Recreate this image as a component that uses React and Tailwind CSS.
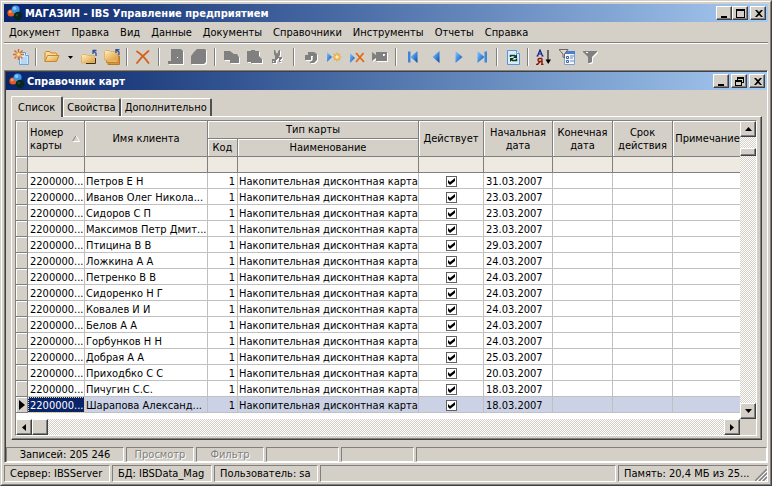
import React, { useState } from 'react';
import clsx from 'clsx';

const MENU = ['Документ', 'Правка', 'Вид', 'Данные', 'Документы', 'Справочники', 'Инструменты', 'Отчеты', 'Справка'];
const TABS = ['Список', 'Свойства', 'Дополнительно'];

const CARDS = [
  { client: 'Петров Е Н', start: '31.03.2007' },
  { client: 'Иванов Олег Никола...', start: '23.03.2007' },
  { client: 'Сидоров С П', start: '23.03.2007' },
  { client: 'Максимов Петр Дмит...', start: '23.03.2007' },
  { client: 'Птицина В В', start: '29.03.2007' },
  { client: 'Ложкина А А', start: '24.03.2007' },
  { client: 'Петренко В В', start: '24.03.2007' },
  { client: 'Сидоренко Н Г', start: '24.03.2007' },
  { client: 'Ковалев И И', start: '24.03.2007' },
  { client: 'Белов А А', start: '24.03.2007' },
  { client: 'Горбунков Н Н', start: '24.03.2007' },
  { client: 'Добрая А А', start: '25.03.2007' },
  { client: 'Приходбко С С', start: '20.03.2007' },
  { client: 'Пичугин С.С.', start: '18.03.2007' },
  { client: 'Шарапова Александ...', start: '18.03.2007' },
];

const RAISED = 'bg-[#d4d0c8] border border-t-white border-l-white border-r-[#404040] border-b-[#404040] shadow-[inset_-1px_-1px_0_#808080]';
const CHECKER = 'bg-[repeating-conic-gradient(#ffffff_0_25%,#d4d0c8_0_50%)] bg-[length:2px_2px]';
const HEAD = 'border-r border-b border-[#808080] bg-[#d4d0c8] p-0 text-center font-normal leading-[13px] shadow-[inset_1px_1px_0_#ffffff]';
const CELL = 'h-4 overflow-hidden border-r border-b border-[#c0c0c0] pt-0.5 pb-0 leading-[13px]';

/* ---------- Icons ---------- */

const Svg = ({ children, size = 16, box = 16, ...rest }) => (
  <svg width={size} height={size} viewBox={`0 0 ${box} ${box}`} fill="none" aria-hidden="true" {...rest}>
    {children}
  </svg>
);

const AppIcon = () => (
  <Svg>
    <circle cx="4" cy="8" r="3.6" fill="#e8591c" />
    <circle cx="3.2" cy="6.8" r="1.5" fill="#f79a63" />
    <circle cx="8.6" cy="4.4" r="4" fill="#3d95e6" />
    <circle cx="7.6" cy="3.2" r="1.7" fill="#8cc6fa" />
    <circle cx="11" cy="11" r="4.2" fill="#06281c" />
    <circle cx="9.8" cy="10" r="1.2" fill="#1c4a36" />
  </Svg>
);

const NewIcon = () => (
  <Svg>
    <path d="M6.5 3.5h6l3 3v9h-9z" fill="#d6eafc" stroke="#6f9fd8" />
    <path d="M8 9l6-2v8H8z" fill="#b4d6f8" />
    <path d="M12.5 3.5v3h3" fill="#fff" stroke="#6f9fd8" />
    <path d="M5.5 0v3M5.5 8v3M0 5.5h3M8 5.5h3M1.5 1.5l2 2M7.5 7.5l2 2M9.5 1.5l-2 2M3.5 7.5l-2 2" stroke="#d9691c" strokeWidth="1.4" />
    <circle cx="5.5" cy="5.5" r="2" fill="#ffe49a" stroke="#e88a2c" />
  </Svg>
);

const FolderFill = () => (
  <defs>
    <linearGradient id="folder" x1="0" y1="0" x2="1" y2="1">
      <stop offset="0" stopColor="#fff0c0" />
      <stop offset="1" stopColor="#dc9c3c" />
    </linearGradient>
  </defs>
);

const OpenIcon = () => (
  <Svg>
    <FolderFill />
    <path d="M1 12.500V3.500l1-1h4l1 1.500h5l1 1v2" fill="#fbdc94" stroke="#cf8426" />
    <path d="M1 12.500l2.500-6h11.500l-2.500 6z" fill="url(#folder)" stroke="#cf8426" strokeLinejoin="round" />
  </Svg>
);

const FolderUpIcon = () => (
  <Svg>
    <FolderFill />
    <path d="M.5 6.500l1-1h4l1 1h7v7.500h-13z" fill="url(#folder)" stroke="#e0b468" />
    <path d="M5 14.500h9.500V9" stroke="#3b2d14" />
    <path d="M15 7V4l-3-2M12 5V1.500h3.500" stroke="#2d4f9c" strokeWidth="1.300" />
  </Svg>
);

const FoldersIcon = () => (
  <Svg>
    <FolderFill />
    <path d="M4 7h11.500v8.500H4z" fill="#d8963c" stroke="#b87828" />
    <path d="M2.500 5h11.500v8.500H2.500z" fill="#eab45c" stroke="#c5842e" />
    <path d="M.5 2.500l1-1h4l1 1H13v8.500H.5z" fill="url(#folder)" stroke="#e0b468" />
    <path d="M15 6V3l-2.500-2M12 4V.7h3.500" stroke="#2d4f9c" strokeWidth="1.300" />
  </Svg>
);

const DeleteIcon = () => (
  <Svg>
    <path d="M2 2.500C6 5 10 9 13.500 14M13.500 2C9 5.500 5.500 9 2 14" stroke="#d4601c" strokeWidth="1.800" strokeLinecap="round" />
  </Svg>
);

// Disabled pictures are a grey silhouette with a white edge to the lower right
const Disabled = ({ d }) => (
  <Svg>
    <path d={d} fill="#ffffff" transform="translate(1 1)" fillRule="evenodd" />
    <path d={d} fill="#808080" fillRule="evenodd" />
  </Svg>
);

const SAVE = 'M3 0h10l2 2v13H0v-3h3zM9 8v1h1V8z';
const SAVE_ALL = 'M6 0h8l1 1v12l-2 2H0V7l3-4z';
const COPY = 'M0 2h6l4 3h3l2 3v6H6v-3H0z';
const PASTE = 'M0 2h4V1h4v1h4v5l3 3v4H4v-1H0z';
const CUT = 'M4 1h1l2 4 2-4h1v5l-1 2h3v2h-1v3H9v-3H7v1H6v3H2v-4h3V7L4 5zM3 12v1h1v-1zM8 9v1h1V9zM10 11v1h1v-1z';
const UNDO = 'M5 3h6l3 2v6l-3 3H7v-1l3-2V7H8v4H2V6h3z';
const POST = 'M0 3l4 3V3h11v9H4V9l-4 3zM11 5v2h2V5z';
const FUNNEL = 'M1 2h14v1l-5 5v5l-2 1H6V8L1 3zM4 3v1h2V3z';

const Blue = () => (
  <defs>
    <linearGradient id="blue" x1="0" y1="0" x2="1" y2="1">
      <stop offset="0" stopColor="#8cc8fa" />
      <stop offset=".5" stopColor="#3f8ee4" />
      <stop offset="1" stopColor="#0c3f98" />
    </linearGradient>
  </defs>
);

const InsertIcon = () => (
  <Svg>
    <Blue />
    <path d="M1 3l5 5-5 5z" fill="url(#blue)" />
    <path d="M11 3.500v9M6.500 8h9M8 5l6 6M14 5l-6 6" stroke="#eba32c" strokeWidth="1.200" />
    <circle cx="11" cy="8" r="1.700" fill="#fff3b0" />
  </Svg>
);

const RemoveIcon = () => (
  <Svg>
    <Blue />
    <path d="M1 4l5 5-5 5z" fill="url(#blue)" />
    <path d="M7 4l8 9M14.500 4L7 13" stroke="#e06a14" strokeWidth="1.800" />
  </Svg>
);

const FirstIcon = () => (
  <Svg>
    <Blue />
    <path d="M3 2.500h2.500v11H3z" fill="#3f86d8" />
    <path d="M12.500 2v12L5.500 8z" fill="url(#blue)" />
  </Svg>
);

const PrevIcon = () => (
  <Svg>
    <Blue />
    <path d="M11.500 2v12L4.500 8z" fill="url(#blue)" />
  </Svg>
);

const NextIcon = () => (
  <Svg>
    <Blue />
    <path d="M4.500 2v12l7-6z" fill="url(#blue)" />
  </Svg>
);

const LastIcon = () => (
  <Svg>
    <Blue />
    <path d="M10.500 2.500H13v11h-2.500z" fill="#3f86d8" />
    <path d="M3.500 2v12l7-6z" fill="url(#blue)" />
  </Svg>
);

const RefreshIcon = () => (
  <Svg>
    <path d="M2.500 1.500h9l3 3v11h-12z" fill="#d8ebff" stroke="#5b94d6" />
    <path d="M11.500 1.500v3h3" fill="#fff" stroke="#5b94d6" />
    <path d="M5.500 8V6.500h4l1 1M11.500 9.500v2h-4l-1-1" stroke="#0c3c1c" strokeWidth="1.500" />
    <path d="M12 5v4H8zM5 13V9h4z" fill="#0c3c1c" />
  </Svg>
);

const SortIcon = () => (
  <Svg>
    <path d="M1.500 7l2.500-6 2.500 6M2 5h4M.5 7h2M5.500 7h2" stroke="#0a1c8c" strokeWidth="1.200" />
    <path d="M6 9.500v6M6 9.500H3.500a1.500 1.500 0 000 3H6M4 12.500L1.500 15.500M5 15.500h2.500M0 15.500h2" stroke="#8c1408" strokeWidth="1.400" />
    <path d="M12 1v12" stroke="#000" />
    <path d="M9.500 10.500h5.500L12.250 15z" fill="#000" />
  </Svg>
);

const FilterTableIcon = () => (
  <Svg>
    <path d="M5.500 2.500h10v13h-10z" fill="#f4f8fe" stroke="#7f9fce" />
    <path d="M6 2h10v3H6z" fill="#4a7fd0" />
    <path d="M7.500 7.500h2v2h-2zM7.500 11.500h2v2h-2z" stroke="#3d5f94" />
    <path d="M11 7h4M11 9h3M11 12h4" stroke="#5c86c4" />
    <path d="M0 .5h9L5.500 5v4l-1.500-1V5z" fill="#dcd8d0" stroke="#6c6860" />
  </Svg>
);

/* ---------- Chrome ---------- */

const GLYPHS = {
  min: 'M3 8h6v2H3z',
  max: 'M2 1h9v9H2zM3 3v6h7V3z',
  restore: 'M4 1h7v6H9v3H2V4h2zM5 3v1h4v2h1V3zM3 6v3h5V6z',
  close: 'M3 2h2l2 2 2-2h2L8 5.500 11 9H9L7 7 5 9H3l3-3.500z',
};

const CaptionButton = ({ kind, label }) => (
  <button aria-label={label} className={clsx('flex h-3.5 w-4 items-center justify-center', RAISED)}>
    <svg width="13" height="11" viewBox="0 0 13 11" aria-hidden="true">
      <path d={GLYPHS[kind]} fillRule="evenodd" fill="#000" />
    </svg>
  </button>
);

const TitleBar = ({ title, gap, middle }) => (
  <header className="flex h-[18px] shrink-0 items-center bg-linear-to-r from-[#0a246a] to-[#a6caf0] pr-0.5 pl-[3px] text-white">
    <AppIcon />
    <h1 className="ml-0.5 flex-1 truncate font-bold">{title}</h1>
    <div className="flex">
      <CaptionButton kind="min" label="Свернуть" />
      <span className={gap}><CaptionButton kind={middle} label="Развернуть" /></span>
      <span className="ml-0.5"><CaptionButton kind="close" label="Закрыть" /></span>
    </div>
  </header>
);

const Tool = ({ label, disabled, children }) => (
  <button aria-label={label} disabled={disabled} className="flex h-6 w-[23px] items-center justify-center">
    {children}
  </button>
);

const Separator = ({ wide }) => (
  <span className={clsx('h-[18px] w-0.5 border-l border-l-[#808080] border-r border-r-white', wide ? 'mx-1' : 'mx-[3px]')} />
);

const Toolbar = () => (
  <div className="flex h-[27px] shrink-0 items-center border-t border-white pl-[5px]">
    <Tool label="Создать"><NewIcon /></Tool>
    <Separator />
    <Tool label="Открыть"><OpenIcon /></Tool>
    <button aria-label="Варианты открытия" className="flex h-6 w-3.5 items-center justify-center">
      <svg width="5" height="3" viewBox="0 0 5 3" aria-hidden="true"><path d="M0 0h5L2.500 3z" fill="#000" /></svg>
    </button>
    <Tool label="Вверх"><FolderUpIcon /></Tool>
    <Tool label="Все папки"><FoldersIcon /></Tool>
    <Separator />
    <Tool label="Удалить"><DeleteIcon /></Tool>
    <Separator wide />
    <Tool label="Сохранить" disabled><Disabled d={SAVE} /></Tool>
    <Tool label="Сохранить все" disabled><Disabled d={SAVE_ALL} /></Tool>
    <Separator wide />
    <Tool label="Копировать" disabled><Disabled d={COPY} /></Tool>
    <Tool label="Вставить" disabled><Disabled d={PASTE} /></Tool>
    <Tool label="Вырезать" disabled><Disabled d={CUT} /></Tool>
    <Separator wide />
    <Tool label="Отменить" disabled><Disabled d={UNDO} /></Tool>
    <Tool label="Добавить запись"><InsertIcon /></Tool>
    <Tool label="Удалить запись"><RemoveIcon /></Tool>
    <Tool label="Записать" disabled><Disabled d={POST} /></Tool>
    <Separator wide />
    <Tool label="Первая"><FirstIcon /></Tool>
    <Tool label="Предыдущая"><PrevIcon /></Tool>
    <Tool label="Следующая"><NextIcon /></Tool>
    <Tool label="Последняя"><LastIcon /></Tool>
    <Separator />
    <Tool label="Обновить"><RefreshIcon /></Tool>
    <Separator />
    <Tool label="Сортировка"><SortIcon /></Tool>
    <Tool label="Настройка фильтра"><FilterTableIcon /></Tool>
    <Tool label="Фильтр" disabled><Disabled d={FUNNEL} /></Tool>
  </div>
);

const ARROWS = {
  up: 'M0 4h7L3.500 0z',
  down: 'M0 0h7L3.500 4z',
  left: 'M4 0v7L0 3.500z',
  right: 'M0 0v7l4-3.500z',
};

const ScrollButton = ({ dir, label }) => {
  const upright = dir === 'up' || dir === 'down';
  return (
    <button aria-label={label} className={clsx('flex size-4 shrink-0 items-center justify-center', RAISED)}>
      <svg width={upright ? 7 : 4} height={upright ? 4 : 7} aria-hidden="true">
        <path d={ARROWS[dir]} fill="#000" />
      </svg>
    </button>
  );
};

/* ---------- Grid ---------- */

const CheckCell = ({ checked, onChange, label }) => (
  <span className="relative mx-auto block size-[11px]">
    <input
      type="checkbox"
      aria-label={label}
      checked={checked}
      onChange={onChange}
      className="peer block size-[11px] appearance-none border border-[#606060] bg-white"
    />
    <svg width="7" height="7" viewBox="0 0 7 7" className="pointer-events-none absolute top-0.5 left-0.5 hidden peer-checked:block" aria-hidden="true">
      <path d="M0 2l2 2 5-4v3L2 7 0 5z" fill="#000" />
    </svg>
  </span>
);

const CardTable = () => {
  const [current, setCurrent] = useState(CARDS.length - 1);
  const [off, setOff] = useState([]);

  const toggle = (i) => setOff((o) => (o.includes(i) ? o.filter((x) => x !== i) : [...o, i]));

  return (
    <table className="w-full min-w-[727px] table-fixed border-separate border-spacing-0 whitespace-nowrap">
      <colgroup>
        <col className="w-3" />
        <col className="w-[57px]" />
        <col className="w-[123px]" />
        <col className="w-[30px]" />
        <col className="w-[181px]" />
        <col className="w-[65px]" />
        <col className="w-[69px]" />
        <col className="w-[60px]" />
        <col className="w-[60px]" />
        <col />
      </colgroup>
      <thead>
        <tr className="h-[18px]">
          <th rowSpan={2} className={HEAD} aria-label="Указатель" />
          <th rowSpan={2} className={HEAD}>
            <div className="flex items-center justify-between pr-1 pl-0.5 text-left">
              <span>Номер<br />карты</span>
              <svg width="8" height="7" viewBox="0 0 8 7" fill="none" aria-hidden="true">
                <path d="M4 .5L.5 6.500" stroke="#808080" />
                <path d="M4 .5l3.500 6H.5" stroke="#fff" />
              </svg>
            </div>
          </th>
          <th rowSpan={2} className={HEAD}>Имя клиента</th>
          <th colSpan={2} className={HEAD}>Тип карты</th>
          <th rowSpan={2} className={HEAD}>Действует</th>
          <th rowSpan={2} className={HEAD}>Начальная<br />дата</th>
          <th rowSpan={2} className={HEAD}>Конечная<br />дата</th>
          <th rowSpan={2} className={HEAD}>Срок<br />действия</th>
          <th rowSpan={2} className={HEAD}>Примечание</th>
        </tr>
        <tr className="h-[18px]">
          <th className={HEAD}>Код</th>
          <th className={HEAD}>Наименование</th>
        </tr>
        <tr className="h-4">
          <td className={HEAD} />
          {[1, 2, 3, 4, 5, 6, 7, 8, 9].map((c) => (
            <td key={c} className="border-r border-b border-[#808080] bg-[#eee9e1] p-0" />
          ))}
        </tr>
      </thead>
      <tbody>
        {CARDS.map((card, i) => {
          const active = i === current;
          return (
            <tr key={i} onClick={() => setCurrent(i)} className={clsx('h-4', active ? 'bg-[#ccd2e6]' : 'bg-white')}>
              <td className={HEAD}>
                {active && (
                  <svg width="6" height="10" viewBox="0 0 6 10" className="mx-auto" aria-hidden="true"><path d="M0 0v10l6-5z" fill="#000" /></svg>
                )}
              </td>
              <td className={clsx(CELL, 'pr-0 pl-0.5', active && 'bg-[#0a246a] text-white outline-1 -outline-offset-1 outline-dotted outline-[#f0d890]')}>2200000...</td>
              <td className={clsx(CELL, 'pr-0 pl-px')}>{card.client}</td>
              <td className={clsx(CELL, 'pr-0.5 pl-0 text-right')}>1</td>
              <td className={clsx(CELL, 'pr-0 pl-px')}>Накопительная дисконтная карта</td>
              <td className={clsx(CELL, 'px-0')}>
                <CheckCell checked={!off.includes(i)} onChange={() => toggle(i)} label={`Действует: ${card.client}`} />
              </td>
              <td className={clsx(CELL, 'pr-0 pl-0.5')}>{card.start}</td>
              <td className={CELL} />
              <td className={CELL} />
              <td className={CELL} />
            </tr>
          );
        })}
      </tbody>
    </table>
  );
};

const StatusCell = ({ className, children }) => (
  <div className={clsx('truncate border border-t-[#808080] border-l-[#808080] border-r-white border-b-white', className)}>
    {children}
  </div>
);

export default function App() {
  const [tab, setTab] = useState(0);

  return (
    <div className="flex h-screen flex-col bg-[#d4d0c8] font-['DejaVu_Sans_Condensed','DejaVu_Sans',sans-serif] text-[11px] leading-[13px] text-black">
      <div className="flex min-h-0 flex-1 flex-col border border-t-[#d4d0c8] border-l-[#d4d0c8] border-r-[#404040] border-b-[#404040]">
        <div className="flex min-h-0 flex-1 flex-col border border-t-white border-l-white border-r-[#808080] border-b-[#808080] p-0.5">
          <TitleBar title="МАГАЗИН - IBS Управление предприятием" middle="max" />

          <nav className="flex h-[21px] shrink-0 items-center gap-[11px] border-b border-[#808080] pl-[5px]">
            {MENU.map((m) => <button key={m}>{m}</button>)}
          </nav>

          <Toolbar />

          {/* Child window */}
          <main className="flex min-h-0 flex-1 flex-col border border-t-[#808080] border-l-[#808080] border-r-white border-b-white">
            <div className="flex min-h-0 flex-1 flex-col border-t border-l border-[#404040]">
              <TitleBar title="Справочник карт" gap="ml-0.5" middle="restore" />

              <div className="flex min-h-0 flex-1 flex-col px-[5px] pt-1.5 pb-[7px]">
                <div role="tablist" className="flex items-end">
                  {TABS.map((t, i) => (
                    <button
                      key={t}
                      role="tab"
                      aria-selected={tab === i}
                      onClick={() => setTab(i)}
                      className={clsx(
                        'rounded-t-xs border-t border-l border-t-white border-l-white border-r-2 border-r-[#505050]',
                        tab === i ? 'relative -mb-px h-[21px] bg-[#d4d0c8] px-1.5' : 'h-[18px] px-[3px]',
                      )}
                    >
                      {t}
                    </button>
                  ))}
                </div>

                <section className="flex min-h-0 flex-1 flex-col border border-t-white border-l-white border-r-[#404040] border-b-[#404040] shadow-[inset_-1px_-1px_0_#808080]">
                  <div className="m-[3px] mr-1 flex min-h-0 flex-1 flex-col border border-t-[#808080] border-l-[#808080] border-r-white border-b-white">
                    <div className="flex min-h-0 flex-1">
                      <div className="min-w-0 flex-1 overflow-hidden bg-white">
                        <CardTable />
                      </div>
                      <div className={clsx('flex w-4 shrink-0 flex-col', CHECKER)}>
                        <ScrollButton dir="up" label="Вверх" />
                        <div className={clsx('mt-[11px] h-2', RAISED)} />
                        <span className="flex-1" />
                        <ScrollButton dir="down" label="Вниз" />
                      </div>
                    </div>
                    <div className="flex h-4 shrink-0">
                      <div className={clsx('flex min-w-0 flex-1', CHECKER)}>
                        <ScrollButton dir="left" label="Влево" />
                        <div className={clsx('size-4', RAISED)} />
                        <span className="flex-1" />
                        <ScrollButton dir="right" label="Вправо" />
                      </div>
                      <div className="w-4 shrink-0" />
                    </div>
                  </div>
                </section>
              </div>

              <footer className="flex h-[15px] shrink-0 gap-0.5 text-center">
                <StatusCell className="w-[118px]">Записей: 205 246</StatusCell>
                <StatusCell className="w-[68px] text-[#808080] text-shadow-[1px_1px_0_#ffffff]">Просмотр</StatusCell>
                <StatusCell className="w-[68px] text-[#808080] text-shadow-[1px_1px_0_#ffffff]">Фильтр</StatusCell>
                <StatusCell className="w-[73px]" />
                <StatusCell className="w-[73px]" />
                <StatusCell className="flex-1" />
              </footer>
            </div>
          </main>

          <footer className="mt-0.5 flex h-[17px] shrink-0 gap-0.5">
            <StatusCell className="w-[106px] px-[5px] py-px">Сервер: IBSServer</StatusCell>
            <StatusCell className="w-[100px] px-[5px] py-px">БД: IBSData_Mag</StatusCell>
            <StatusCell className="w-[104px] px-[5px] py-px">Пользователь: sa</StatusCell>
            <StatusCell className="flex-1" />
            <StatusCell className="flex w-[150px] justify-between pl-[5px]">
              <span className="py-px">Память: 20,4 МБ из 25...</span>
              <svg width="12" height="12" viewBox="0 0 12 12" className="shrink-0 self-end" aria-hidden="true">
                <path d="M0 12L12 0M4 12l8-8M8 12l4-4" stroke="#808080" strokeWidth="1.500" />
                <path d="M2 12L12 2M6 12l6-6M10 12l2-2" stroke="#fff" />
              </svg>
            </StatusCell>
          </footer>
        </div>
      </div>
    </div>
  );
}
